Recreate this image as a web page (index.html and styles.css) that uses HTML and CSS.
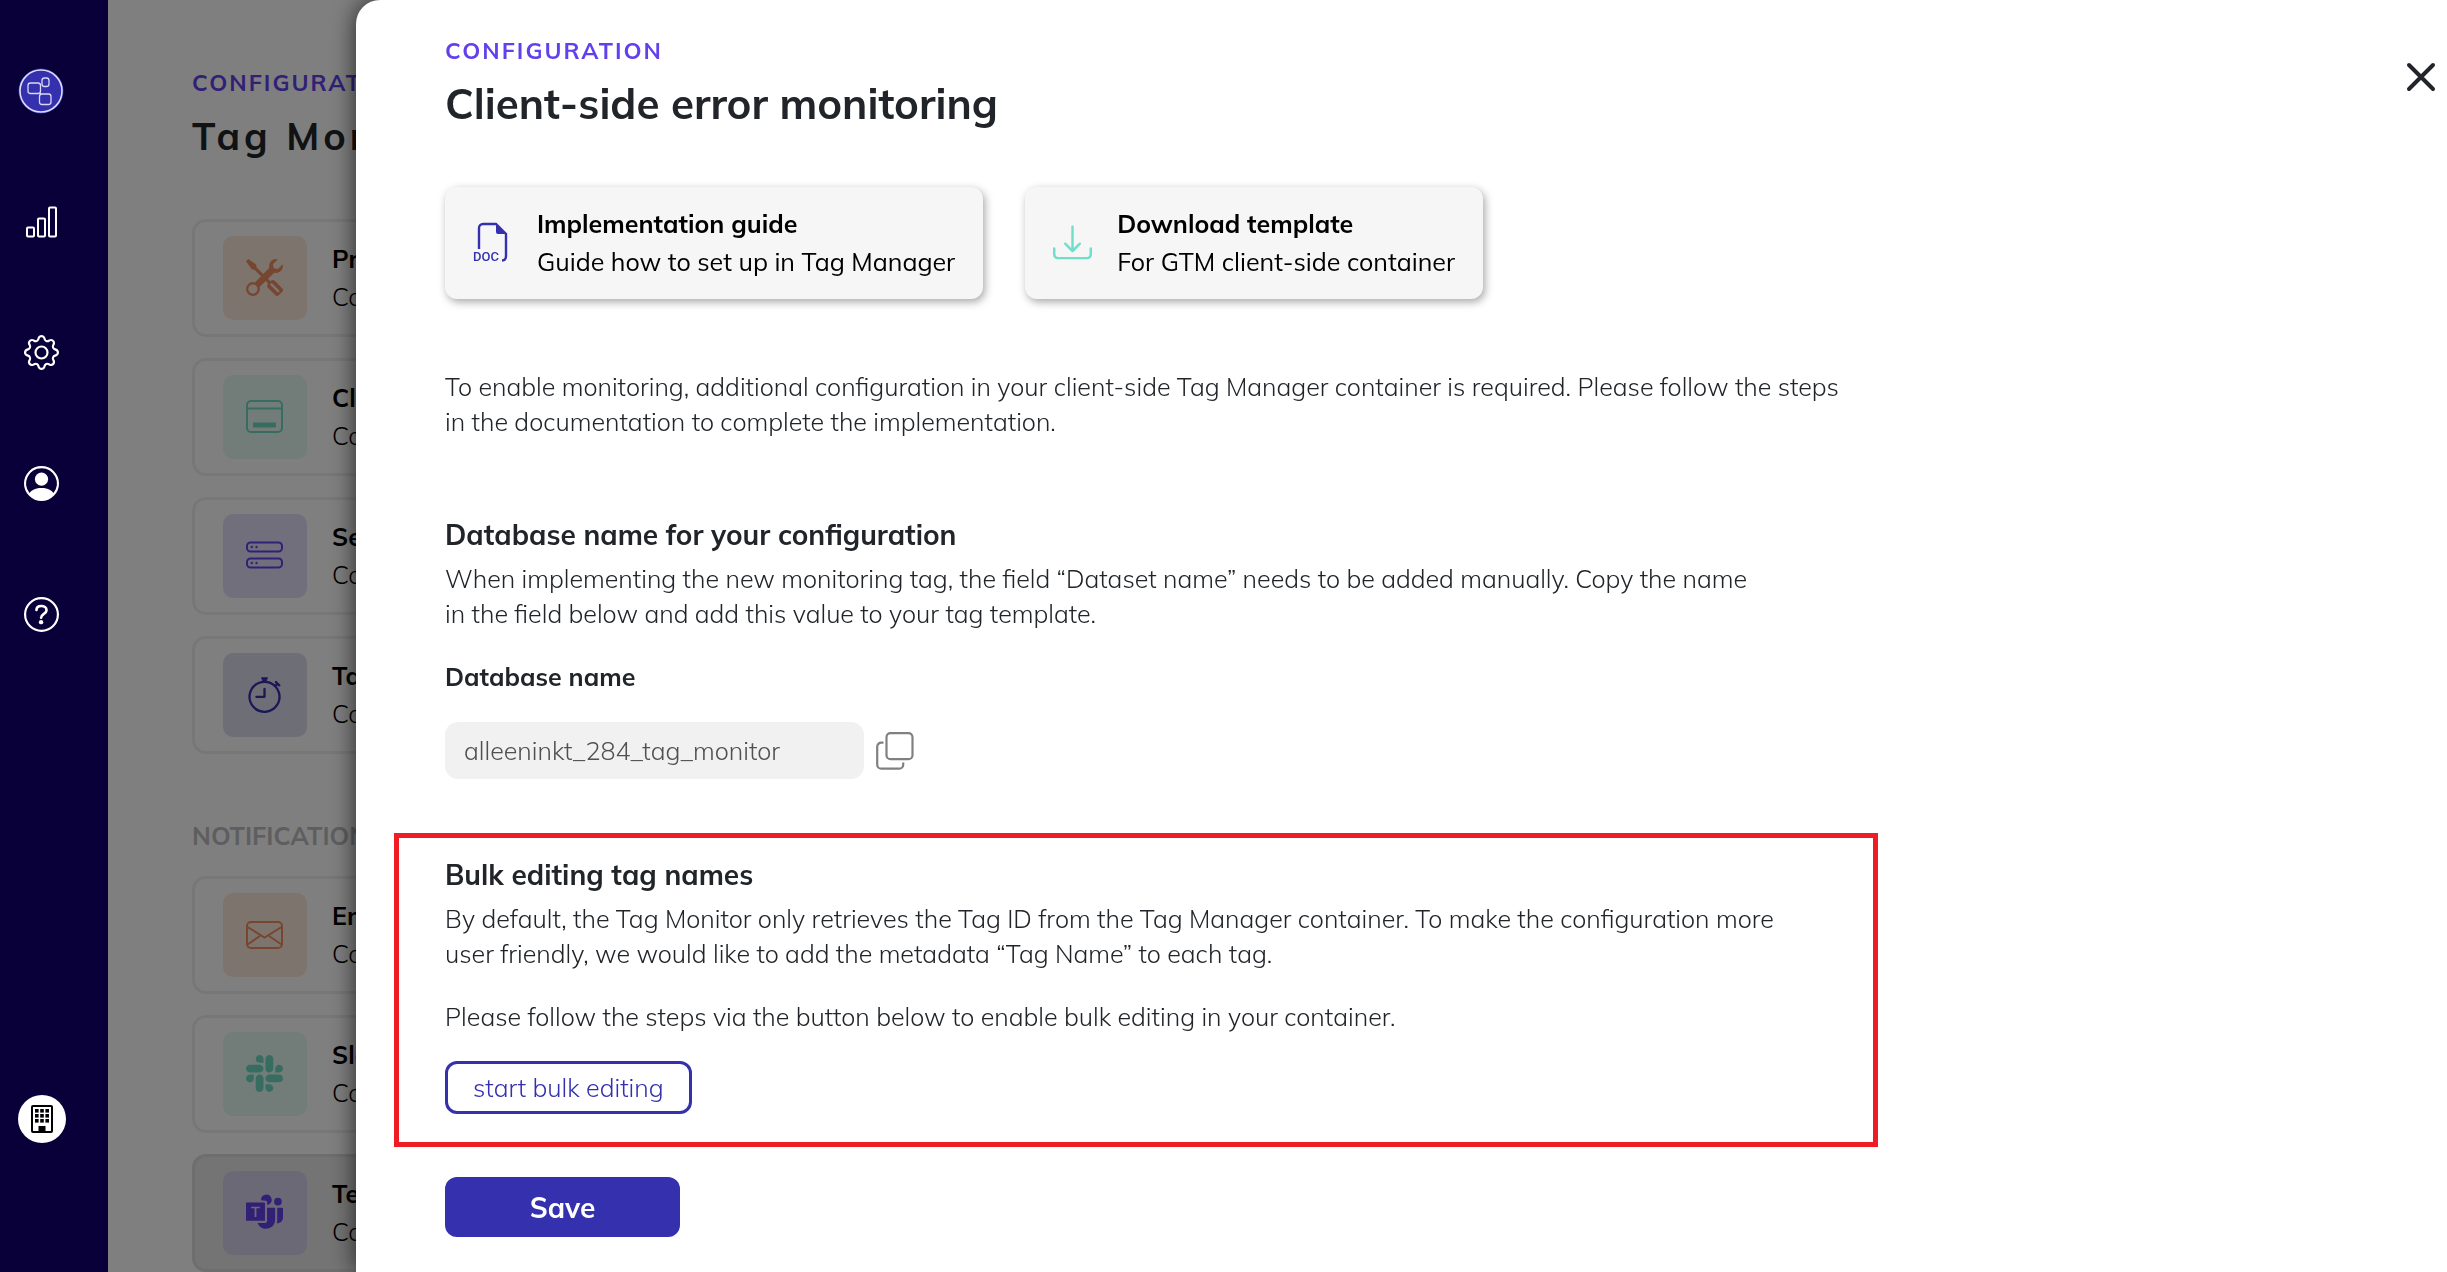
FILE: index.html
```html
<!DOCTYPE html>
<html lang="en">
<head>
<meta charset="utf-8">
<title>Tag Monitor – Client-side error monitoring</title>
<link rel="stylesheet" href="styles.css">
</head>
<body>
<div class="app">
  <nav class="sidebar" aria-label="Main">
    <a class="nav-item" href="#" aria-label="Home">
      <svg class="nav-logo" viewBox="0 -1 46 46" fill="none" stroke="#fff">
        <circle cx="23" cy="23" r="22" fill="#3430ae" stroke="#3430ae"/>
        <circle cx="23" cy="23" r="21" stroke="#dcdcf8" stroke-width="1.6"/>
        <g stroke="#d8d8f6" stroke-width="1.3">
          <rect x="10" y="15" width="12.500" height="10.500" rx="2.500"/>
          <rect x="24" y="10" width="7" height="8.500" rx="2.500"/>
          <rect x="21.500" y="26" width="11.500" height="10.500" rx="2.500"/>
          <path d="M22 24.500l1 2"/>
        </g>
      </svg>
    </a>
    <a class="nav-item" href="#" aria-label="Reports">
      <svg class="nav-icon" viewBox="0 0 35 35" fill="none" stroke="#fff" stroke-width="2">
        <rect x="3" y="23.500" width="7" height="9" rx="1"/>
        <rect x="14" y="14.500" width="7" height="18" rx="1"/>
        <rect x="25" y="3.500" width="7" height="29" rx="1"/>
      </svg>
    </a>
    <a class="nav-item" href="#" aria-label="Settings">
      <svg class="nav-icon" viewBox="0 0 16 16" fill="#fff">
        <path d="M8 4.754a3.246 3.246 0 1 0 0 6.492 3.246 3.246 0 0 0 0-6.492M5.754 8a2.246 2.246 0 1 1 4.492 0 2.246 2.246 0 0 1-4.492 0"/>
        <path d="M9.796 1.343c-.527-1.790-3.065-1.790-3.592 0l-.094.319a.873.873 0 0 1-1.255.52l-.292-.16c-1.640-.892-3.433.902-2.540 2.541l.159.292a.873.873 0 0 1-.52 1.255l-.319.094c-1.790.527-1.790 3.065 0 3.592l.319.094a.873.873 0 0 1 .52 1.255l-.16.292c-.892 1.640.901 3.434 2.541 2.540l.292-.159a.873.873 0 0 1 1.255.52l.094.319c.527 1.790 3.065 1.790 3.592 0l.094-.319a.873.873 0 0 1 1.255-.52l.292.16c1.640.893 3.434-.902 2.540-2.541l-.159-.292a.873.873 0 0 1 .52-1.255l.319-.094c1.790-.527 1.790-3.065 0-3.592l-.319-.094a.873.873 0 0 1-.52-1.255l.16-.292c.893-1.640-.902-3.433-2.541-2.540l-.292.159a.873.873 0 0 1-1.255-.52zm-2.633.283c.246-.835 1.428-.835 1.674 0l.094.319a1.873 1.873 0 0 0 2.693 1.115l.291-.16c.764-.415 1.600.42 1.184 1.185l-.159.292a1.873 1.873 0 0 0 1.116 2.692l.318.094c.835.246.835 1.428 0 1.674l-.319.094a1.873 1.873 0 0 0-1.115 2.693l.16.291c.415.764-.42 1.600-1.185 1.184l-.291-.159a1.873 1.873 0 0 0-2.693 1.116l-.094.318c-.246.835-1.428.835-1.674 0l-.094-.319a1.873 1.873 0 0 0-2.692-1.115l-.292.16c-.764.415-1.600-.42-1.184-1.185l.159-.291A1.873 1.873 0 0 0 1.945 8.930l-.319-.094c-.835-.246-.835-1.428 0-1.674l.319-.094A1.873 1.873 0 0 0 3.060 4.377l-.16-.292c-.415-.764.42-1.600 1.185-1.184l.292.159a1.873 1.873 0 0 0 2.692-1.115z"/>
      </svg>
    </a>
    <a class="nav-item" href="#" aria-label="Account">
      <svg class="nav-icon" viewBox="0 0 16 16" fill="#fff">
        <path d="M11 6a3 3 0 1 1-6 0 3 3 0 0 1 6 0"/>
        <path fill-rule="evenodd" d="M0 8a8 8 0 1 1 16 0A8 8 0 0 1 0 8m8-7a7 7 0 0 0-5.468 11.370C3.242 11.226 4.805 10 8 10s4.757 1.225 5.468 2.370A7 7 0 0 0 8 1"/>
      </svg>
    </a>
    <a class="nav-item" href="#" aria-label="Help">
      <svg class="nav-icon" viewBox="0 0 16 16" fill="none" stroke="#fff">
        <circle cx="8" cy="8" r="7.500"/>
        <path d="M5.700 5.900C5.700 4.700 6.600 4.100 7.900 4.100s2.400.7 2.400 1.900c0 1.700-2.500 1.700-2.500 3.500" stroke-width="1.200" stroke-linecap="round"/>
        <circle cx="7.800" cy="11.500" r="1" fill="#fff" stroke="none"/>
      </svg>
    </a>
    <a class="nav-item nav-company" href="#" aria-label="Company">
      <svg viewBox="0 0 48 48">
        <circle cx="24" cy="24" r="24" fill="#fff"/>
        <rect x="14" y="11" width="20" height="26" rx="1" fill="none" stroke="#000" stroke-width="2"/>
        <g fill="#000">
          <rect x="17" y="14" width="3.600" height="3.600"/><rect x="22.200" y="14" width="3.600" height="3.600"/><rect x="27.400" y="14" width="3.600" height="3.600"/>
          <rect x="17" y="19" width="3.600" height="3.600"/><rect x="22.200" y="19" width="3.600" height="3.600"/><rect x="27.400" y="19" width="3.600" height="3.600"/>
          <rect x="17" y="24" width="3.600" height="3.600"/><rect x="22.200" y="24" width="3.600" height="3.600"/><rect x="27.400" y="24" width="3.600" height="3.600"/>
          <rect x="20.500" y="31" width="7" height="6"/>
        </g>
      </svg>
    </a>
  </nav>

  <main class="page">
    <p class="eyebrow">CONFIGURATION</p>
    <h1 class="page-title">Tag Monitor</h1>
    <div class="card-list">
      <a class="card" href="#">
        <span class="tile tile-orange"><svg viewBox="0 0 16 16" fill="currentColor">
          <path fill-rule="evenodd" d="M1 0 0 1l2.200 3.081a1 1 0 0 0 .815.419h.07a1 1 0 0 1 .708.293l2.675 2.675-2.617 2.654A3.003 3.003 0 0 0 0 13a3 3 0 1 0 5.878-.851l2.654-2.617.968.968-.305.914a1 1 0 0 0 .242 1.023l3.270 3.270a.997.997 0 0 0 1.414 0l1.586-1.586a.997.997 0 0 0 0-1.414l-3.270-3.270a1 1 0 0 0-1.023-.242L10.500 9.500l-.96-.96 2.680-2.643A3.005 3.005 0 0 0 16 3q0-.405-.102-.777l-2.140 2.141L12 4l-.364-1.757L13.777.102a3 3 0 0 0-3.675 3.680L7.462 6.460 4.793 3.793a1 1 0 0 1-.293-.707v-.071a1 1 0 0 0-.419-.814zm9.646 10.646a.5.5 0 0 1 .708 0l2.914 2.915a.5.5 0 0 1-.707.707l-2.915-2.914a.5.5 0 0 1 0-.708M3 11a2 2 0 1 0 0 4 2 2 0 0 0 0-4"/>
        </svg></span>
        <span class="card-text"><strong>Profile</strong><span>Config</span></span>
      </a>
      <a class="card" href="#">
        <span class="tile tile-green"><svg viewBox="0 0 37 37" fill="none" stroke="currentColor" stroke-width="2">
          <rect x="1" y="3" width="35" height="31" rx="4"/><path d="M1 10.500h35"/><path d="M7 27h23" stroke-width="5"/>
        </svg></span>
        <span class="card-text"><strong>Client</strong><span>Config</span></span>
      </a>
      <a class="card" href="#">
        <span class="tile tile-violet"><svg viewBox="0 0 37 37" fill="none" stroke="currentColor" stroke-width="2">
          <rect x="1" y="5.500" width="35" height="9" rx="3.500"/><rect x="1" y="21.500" width="35" height="9" rx="3.500"/>
          <g fill="currentColor" stroke="none"><circle cx="5.800" cy="10" r="1.200"/><circle cx="10.500" cy="10" r="1.200"/><circle cx="5.800" cy="26" r="1.200"/><circle cx="10.500" cy="26" r="1.200"/></g>
        </svg></span>
        <span class="card-text"><strong>Server</strong><span>Config</span></span>
      </a>
      <a class="card" href="#">
        <span class="tile tile-blue"><svg viewBox="0 0 16 16" fill="currentColor">
          <path d="M8.500 5.600a.5.5 0 1 0-1 0v2.900h-3a.5.5 0 0 0 0 1H8a.5.5 0 0 0 .5-.5z"/>
          <path d="M6.500 1A.5.5 0 0 1 7 .5h2a.5.5 0 0 1 0 1v.57c1.360.196 2.594.78 3.584 1.640l.012-.013.354-.354-.354-.353a.5.5 0 0 1 .707-.708l1.414 1.415a.5.5 0 1 1-.707.707l-.353-.354-.354.354-.013.012A7 7 0 1 1 7 2.071V1.500a.5.5 0 0 1-.5-.5M8 3a6 6 0 1 0 .001 12A6 6 0 0 0 8 3"/>
        </svg></span>
        <span class="card-text"><strong>Tags</strong><span>Config</span></span>
      </a>
    </div>
    <h2 class="group-title">NOTIFICATIONS</h2>
    <div class="card-list">
      <a class="card" href="#">
        <span class="tile tile-orange"><svg viewBox="0 0 37 37" fill="none" stroke="currentColor" stroke-width="2">
          <rect x="1" y="6" width="35" height="26" rx="4"/><path d="M1.500 11l17 10.500L35.500 11M1.500 28.500L14 20M35.500 28.500L23 20"/>
        </svg></span>
        <span class="card-text"><strong>Email</strong><span>Config</span></span>
      </a>
      <a class="card" href="#">
        <span class="tile tile-green"><svg viewBox="0 0 16 16" fill="currentColor">
          <path d="M3.362 10.110c0 .926-.756 1.681-1.681 1.681S0 11.036 0 10.111.756 8.430 1.680 8.430h1.682zm.846 0c0-.924.756-1.680 1.681-1.680s1.681.756 1.681 1.680v4.210c0 .924-.756 1.680-1.680 1.680a1.685 1.685 0 0 1-1.682-1.680zM5.890 3.362c-.926 0-1.682-.756-1.682-1.681S4.964 0 5.890 0s1.680.756 1.680 1.680v1.682zm0 .846c.924 0 1.680.756 1.680 1.681S6.814 7.570 5.890 7.570H1.680C.757 7.570 0 6.814 0 5.890c0-.926.756-1.682 1.680-1.682zm6.749 1.682c0-.926.755-1.682 1.680-1.682S16 4.964 16 5.889s-.756 1.681-1.680 1.681h-1.681zm-.848 0c0 .924-.755 1.680-1.680 1.680A1.685 1.685 0 0 1 8.430 5.890V1.680C8.430.757 9.186 0 10.110 0c.926 0 1.681.756 1.681 1.680zm-1.681 6.748c.926 0 1.682.756 1.682 1.681S11.036 16 10.110 16s-1.681-.756-1.681-1.680v-1.682h1.680zm0-.847c-.924 0-1.680-.755-1.680-1.680s.756-1.681 1.680-1.681h4.210c.924 0 1.680.756 1.680 1.680 0 .926-.756 1.681-1.680 1.681z"/>
        </svg></span>
        <span class="card-text"><strong>Slack</strong><span>Config</span></span>
      </a>
      <a class="card card-active" href="#">
        <span class="tile tile-violet"><svg viewBox="0 0 16 16" fill="currentColor">
          <path fill-rule="evenodd" d="M.3 3.700h7.600a.3.300 0 0 1 .3.300v7.300a.3.300 0 0 1-.3.300H.3a.3.300 0 0 1-.3-.3V4a.3.300 0 0 1 .3-.3M2.200 5.500v.7h1.500v3.700h.8V6.200H6v-.7z"/>
          <path d="M6.500 2.700A2.300 2.300 0 1 1 10 4.500L9.100 4.700V3.400L8.700 2.900z"/>
          <circle cx="13.800" cy="3.300" r="1.650"/>
          <path d="M9.100 5.900h3a.5.5 0 0 1 .5.5V11c0 2.400-1.700 4-4 4-1.600 0-3-.9-3.600-2.500h3.300c.5 0 .8-.3.800-.8z"/>
          <path d="M13.500 5.900h1.900a.6.600 0 0 1 .6.600v3.700c0 1.500-1.100 2.500-2.600 2.500h-.1c.2-.6.200-1 .2-1.700z"/>
        </svg></span>
        <span class="card-text"><strong>Teams</strong><span>Config</span></span>
      </a>
    </div>
  </main>
</div>

<div class="backdrop"></div>

<section class="drawer" role="dialog" aria-labelledby="drawer-title">
  <header class="drawer-head">
    <div>
      <p class="eyebrow">CONFIGURATION</p>
      <h2 class="drawer-title" id="drawer-title">Client-side error monitoring</h2>
    </div>
    <button class="close" type="button" aria-label="Close">
      <svg viewBox="0 0 28 28" fill="none" stroke="#212529" stroke-width="4" stroke-linecap="round"><path d="M2 2l24 24M26 2L2 26"/></svg>
    </button>
  </header>

  <div class="resources">
    <a class="resource" href="#">
      <svg viewBox="0 0 39 39" fill="none" stroke="#3430ae" stroke-width="2.400">
        <path d="M6 26V5a4 4 0 0 1 4-4h13l10 10v22c0 3-1 4.500-4 4.500"/>
        <path d="M23 1v8a2 2 0 0 0 2 2h8z" fill="#3430ae" stroke="none"/>
        <text class="doc-label" x="0" y="38">DOC</text>
      </svg>
      <span class="resource-text"><strong>Implementation guide</strong><span>Guide how to set up in Tag Manager</span></span>
    </a>
    <a class="resource" href="#">
      <svg viewBox="0 0 16 16" fill="#6fdfc9">
        <path d="M.5 9.900a.5.5 0 0 1 .5.5v2.500a1 1 0 0 0 1 1h12a1 1 0 0 0 1-1v-2.500a.5.5 0 0 1 1 0v2.500a2 2 0 0 1-2 2H2a2 2 0 0 1-2-2v-2.500a.5.5 0 0 1 .5-.5"/>
        <path d="M7.646 11.854a.5.5 0 0 0 .708 0l3-3a.5.5 0 0 0-.708-.708L8.500 10.293V1.500a.5.5 0 0 0-1 0v8.793L5.354 8.146a.5.5 0 1 0-.708.708z"/>
      </svg>
      <span class="resource-text"><strong>Download template</strong><span>For GTM client-side container</span></span>
    </a>
  </div>

  <p class="copy intro">To enable monitoring, additional configuration in your client-side Tag Manager container is required. Please follow the steps<br>in the documentation to complete the implementation.</p>

  <section class="database">
    <h3 class="section-title">Database name for your configuration</h3>
    <p class="copy">When implementing the new monitoring tag, the field “Dataset name” needs to be added manually. Copy the name<br>in the field below and add this value to your tag template.</p>
    <label class="field-label" for="database-name">Database name</label>
    <div class="field-row">
      <input class="field" id="database-name" type="text" value="alleeninkt_284_tag_monitor" readonly>
      <button class="copy-button" type="button" aria-label="Copy database name">
        <svg viewBox="0 0 38 38" fill="none" stroke="#808080" stroke-width="2.200">
          <rect x="10.500" y="1.200" width="26" height="26" rx="4"/>
          <path d="M7.500 10.700H5.200a4 4 0 0 0-4 4v18a4 4 0 0 0 4 4h18a4 4 0 0 0 4-4v-2.200"/>
        </svg>
      </button>
    </div>
  </section>

  <section class="bulk">
    <h3 class="section-title">Bulk editing tag names</h3>
    <p class="copy">By default, the Tag Monitor only retrieves the Tag ID from the Tag Manager container. To make the configuration more<br>user friendly, we would like to add the metadata “Tag Name” to each tag.</p>
    <p class="copy bulk-hint">Please follow the steps via the button below to enable bulk editing in your container.</p>
    <button class="outline-button" type="button">start bulk editing</button>
  </section>

  <button class="save" type="button">Save</button>
</section>
</body>
</html>
```
FILE: styles.css
```css
* { box-sizing: border-box; }

body {
  margin: 0;
  height: 100vh;
  overflow: hidden;
  font-family: Mulish, Lato, sans-serif;
  font-size: 25px;
  font-weight: 300;
  line-height: 35px;
  color: #212529;
  background: #fff;
}

h1, h2, h3, p { margin: 0; }
a { color: inherit; text-decoration: none; }
button, input { font: inherit; }
button { padding: 0; border: 0; background: none; cursor: pointer; }
svg { display: block; overflow: visible; }
strong { font-weight: 700; }

.app { display: flex; height: 100vh; }

/* Sidebar */
.sidebar {
  position: relative;
  z-index: 2;
  flex: none;
  display: flex;
  flex-direction: column;
  gap: 83px;
  width: 108px;
  padding: 66px 18px 129px;
  background: #09003a;
}
.nav-item { display: grid; place-items: center; width: 46px; height: 48px; }
.nav-logo { width: 46px; height: 46px; }
.nav-icon { width: 35px; height: 35px; }
.nav-company { width: 48px; margin-top: auto; }
.nav-company svg { width: 48px; height: 48px; }

/* Page under the drawer */
.page { flex: 1; min-width: 0; padding: 65px 84px 0; }
.eyebrow {
  font-size: 23px;
  font-weight: 700;
  line-height: 36px;
  letter-spacing: 2px;
  color: #6340ed;
}
.page-title {
  margin: 11px 0 59px;
  font-size: 38px;
  font-weight: 700;
  line-height: 48px;
  letter-spacing: 4px;
}
.group-title {
  margin: 63px 0 21px;
  font-size: 25px;
  font-weight: 700;
  line-height: 38px;
  color: #bdbdc1;
}
.card-list { display: flex; flex-direction: column; gap: 21px; }
.card {
  display: flex;
  align-items: center;
  gap: 25px;
  height: 118px;
  flex: none;
  padding: 0 28px;
  border: 3px solid #efefef;
  border-radius: 14px;
  color: #000;
}
.card-active { background: #e8e8e8; border-color: #dcdcdc; }
.tile {
  flex: none;
  display: grid;
  place-items: center;
  width: 84px;
  height: 84px;
  padding: 0 1px 1px 0;
  border-radius: 10px;
}
.tile svg { width: 37px; height: 37px; }
.tile-orange { background: #fde8dd; color: #ef8d60; }
.tile-green { background: #e4f8f2; color: #6fd8c2; }
.tile-violet { background: #e2dff8; color: #6340ed; }
.card-active .tile-violet { background: #d5d2ea; }
.tile-blue { background: #dddcee; color: #3430ae; }
.card-text, .resource-text {
  display: flex;
  flex-direction: column;
  line-height: 38px;
  white-space: nowrap;
}
.resource-text { font-weight: 400; }

/* Drawer */
.backdrop { position: fixed; inset: 0; z-index: 1; background: rgba(0, 0, 0, .5); }
.drawer {
  position: fixed;
  inset: 0 0 0 356px;
  z-index: 3;
  display: flex;
  flex-direction: column;
  align-items: flex-start;
  overflow: hidden;
  padding: 33px 12px 0 89px;
  background: #fff;
  border-top-left-radius: 24px;
  box-shadow: 0 0 24px rgba(0, 0, 0, .7);
}
.drawer-head { display: flex; justify-content: space-between; align-self: stretch; }
.drawer-title { margin-top: 8px; font-size: 42px; font-weight: 700; line-height: 54px; }
.close { align-self: flex-start; margin-top: 30px; }
.close svg { width: 28px; height: 28px; }

.resources { display: flex; gap: 42px; margin-top: 56px; }
.resource {
  display: flex;
  align-items: center;
  gap: 25px;
  height: 112px;
  padding: 0 28px;
  border-radius: 12px;
  background: #f6f6f6;
  box-shadow: 2px 3px 8px rgba(0, 0, 0, .35);
  color: #000;
}
.resource svg { flex: none; width: 39px; height: 39px; margin-bottom: 2px; }
.doc-label { font: 500 13px Roboto, sans-serif; fill: #3430ae; stroke: none; }

.intro { margin-top: 70px; }
.database { margin-top: 78px; }
.section-title { margin-bottom: 8px; font-size: 28px; font-weight: 700; line-height: 36px; }
.field-label { display: block; margin-top: 28px; font-weight: 700; }
.field-row { display: flex; align-items: center; gap: 12px; margin-top: 28px; }
.field {
  width: 419px;
  height: 57px;
  padding: 0 19px;
  border: 0;
  border-radius: 13px;
  background: #f1f1f1;
  color: #505050;
}
.copy-button svg { width: 38px; height: 38px; }

.bulk {
  width: 1484px;
  margin: 54px 0 0 -51px;
  padding: 19px 46px 28px;
  border: 5px solid #ee1c24;
}
.bulk-hint { margin-top: 28px; }
.outline-button {
  display: block;
  height: 53px;
  margin-top: 27px;
  padding: 0 25px;
  border: 3px solid #3430ae;
  border-radius: 12px;
  color: #3430ae;
}
.save {
  width: 235px;
  height: 60px;
  margin-top: 30px;
  border-radius: 12px;
  background: #3430ae;
  color: #fff;
  font-size: 28px;
  font-weight: 700;
}
```
